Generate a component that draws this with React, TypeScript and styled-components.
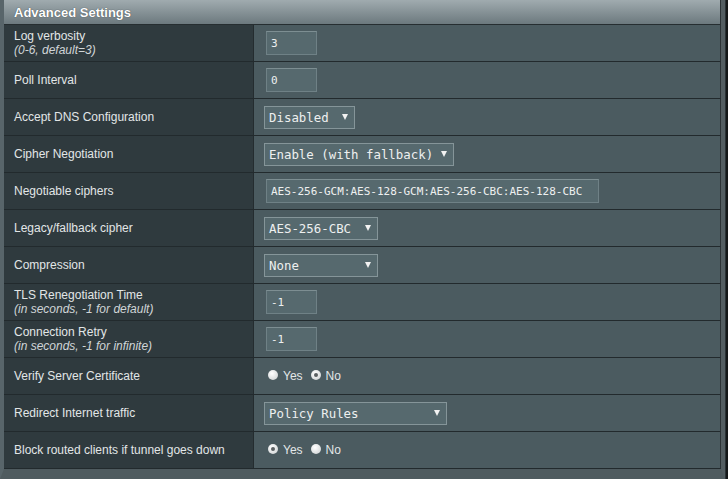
import styled, { createGlobalStyle } from 'styled-components'

const GlobalStyle = createGlobalStyle`
  html, body {
    margin: 0;
    padding: 0;
    background: #141819;
  }
  body {
    font-family: "Liberation Sans", Arial, sans-serif;
  }
`

const Frame = styled.section`
  width: 717px;
  border-left: 4px solid #58656a;
  border-right: 4px solid #535e62;
  border-bottom: 10px solid #4f5b5f;
  background: #4b5b60;
  box-shadow: 1px 0 0 #2a3235;
`

const Header = styled.h2`
  margin: 0;
  height: 25px;
  box-sizing: border-box;
  padding-left: 10px;
  display: flex;
  align-items: center;
  font-size: 13px;
  font-weight: bold;
  color: #ffffff;
  text-shadow: 0 0 1px #2a3235;
  background: linear-gradient(#a0abaf, #6c797e);
  border-bottom: 1px solid #262e31;
  border-right: 1px solid #2b3336;
`

const Row = styled.div`
  display: grid;
  grid-template-columns: 250px 1fr;
  height: 37px;
  box-sizing: border-box;
  border-bottom: 1px solid #222a2d;
  border-right: 1px solid #2b3336;
`

const Label = styled.div`
  background: #2f3a3e;
  border-right: 1px solid #242c2f;
  padding-left: 10px;
  display: flex;
  flex-direction: column;
  justify-content: center;
  font-size: 12px;
  line-height: 14px;
  color: #e2e6e7;
`

const Hint = styled.span`
  font-style: italic;
  color: #d0d5d7;
`

const Value = styled.div`
  display: flex;
  align-items: center;
  padding-left: 10px;
  background: #4b5b60;
`

const TextBox = styled.div<{ $w: number }>`
  width: ${p => p.$w}px;
  height: 24px;
  box-sizing: border-box;
  margin-left: 2px;
  padding-left: 4px;
  display: flex;
  align-items: center;
  background: #56696e;
  border: 1px solid #6f8186;
  border-top-color: #7d8e92;
  font-family: "DejaVu Sans Mono", "Liberation Mono", monospace;
  font-size: 11px;
  color: #eef0f0;
`

const SelectBox = styled.div<{ $w: number }>`
  width: ${p => p.$w}px;
  height: 23px;
  box-sizing: border-box;
  padding: 0 6px 0 4px;
  display: flex;
  align-items: center;
  justify-content: space-between;
  background: #56696e;
  border: 1px solid #859599;
  font-family: "DejaVu Sans Mono", "Liberation Mono", monospace;
  font-size: 12.4px;
  color: #eef0f0;
`

const Arrow = styled.span`
  width: 0;
  height: 0;
  border-left: 3.5px solid transparent;
  border-right: 3.5px solid transparent;
  border-top: 6px solid #f2f2f2;
`

const RadioGroup = styled.div`
  display: flex;
  align-items: center;
  gap: 8px;
  margin-left: 4px;
  font-size: 12px;
  color: #e3e7e8;
`

const RadioItem = styled.span`
  display: flex;
  align-items: center;
  gap: 5px;
`

const Dot = styled.span<{ $on?: boolean }>`
  width: 10px;
  height: 10px;
  border-radius: 50%;
  box-sizing: border-box;
  background: radial-gradient(circle at 40% 35%, #ffffff, #c9cdce);
  display: flex;
  align-items: center;
  justify-content: center;
  margin-top: -2px;

  &::after {
    content: '';
    width: 4px;
    height: 4px;
    border-radius: 50%;
    background: ${p => (p.$on ? '#5a5f61' : 'transparent')};
  }
`

type Field =
  | { kind: 'text'; value: string; width: number }
  | { kind: 'select'; value: string; width: number }
  | { kind: 'radio'; yes: boolean }

type Setting = { label: string; hint?: string; field: Field }

const settings: Setting[] = [
  { label: 'Log verbosity', hint: '(0-6, default=3)', field: { kind: 'text', value: '3', width: 51 } },
  { label: 'Poll Interval', field: { kind: 'text', value: '0', width: 51 } },
  { label: 'Accept DNS Configuration', field: { kind: 'select', value: 'Disabled', width: 91 } },
  { label: 'Cipher Negotiation', field: { kind: 'select', value: 'Enable (with fallback)', width: 190 } },
  { label: 'Negotiable ciphers', field: { kind: 'text', value: 'AES-256-GCM:AES-128-GCM:AES-256-CBC:AES-128-CBC', width: 333 } },
  { label: 'Legacy/fallback cipher', field: { kind: 'select', value: 'AES-256-CBC', width: 114 } },
  { label: 'Compression', field: { kind: 'select', value: 'None', width: 114 } },
  { label: 'TLS Renegotiation Time', hint: '(in seconds, -1 for default)', field: { kind: 'text', value: '-1', width: 51 } },
  { label: 'Connection Retry', hint: '(in seconds, -1 for infinite)', field: { kind: 'text', value: '-1', width: 51 } },
  { label: 'Verify Server Certificate', field: { kind: 'radio', yes: false } },
  { label: 'Redirect Internet traffic', field: { kind: 'select', value: 'Policy Rules', width: 183 } },
  { label: 'Block routed clients if tunnel goes down', field: { kind: 'radio', yes: true } },
]

const renderField = (field: Field) => {
  if (field.kind === 'text') {
    return <TextBox $w={field.width}>{field.value}</TextBox>
  }
  if (field.kind === 'select') {
    return (
      <SelectBox $w={field.width}>
        <span>{field.value}</span>
        <Arrow />
      </SelectBox>
    )
  }
  return (
    <RadioGroup>
      <RadioItem><Dot $on={field.yes} />Yes</RadioItem>
      <RadioItem><Dot $on={!field.yes} />No</RadioItem>
    </RadioGroup>
  )
}

const App = () => {
  return (
    <>
      <GlobalStyle />
      <Frame>
        <Header>Advanced Settings</Header>
        {settings.map(s => (
          <Row key={s.label}>
            <Label>
              <span>{s.label}</span>
              {s.hint && <Hint>{s.hint}</Hint>}
            </Label>
            <Value>{renderField(s.field)}</Value>
          </Row>
        ))}
      </Frame>
    </>
  )
}

export default App
